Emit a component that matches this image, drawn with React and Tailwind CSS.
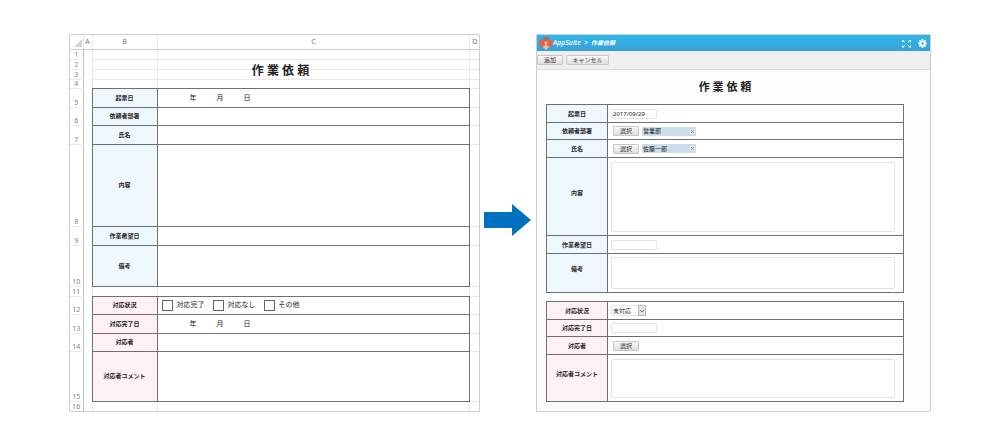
const LINE = "border border-[#707070]";
const GRID = "border border-[#e9e9e9]";
const EDGE = "border border-[#e9e9e9] border-b-[#707070]";

const sheetRows = [
  { no: 1, h: "h-[10px]" },
  { no: 2, h: "h-[10px]" },
  { no: 3, h: "h-[10px]" },
  { no: 4, h: "h-[9px]", edge: true },
  { no: 5, h: "h-[19px]", label: "起票日", tone: "blue", body: <DateBlanks /> },
  { no: 6, h: "h-[18px]", label: "依頼者部署", tone: "blue" },
  { no: 7, h: "h-[19px]", label: "氏名", tone: "blue" },
  { no: 8, h: "h-[82px]", label: "内容", tone: "blue" },
  { no: 9, h: "h-[19px]", label: "作業希望日", tone: "blue" },
  { no: 10, h: "h-[41px]", label: "備考", tone: "blue" },
  { no: 11, h: "h-[10px]", edge: true },
  { no: 12, h: "h-[18px]", label: "対応状況", tone: "pink", body: <StatusChecks /> },
  { no: 13, h: "h-[19px]", label: "対応完了日", tone: "pink", body: <DateBlanks /> },
  { no: 14, h: "h-[18px]", label: "対応者", tone: "pink" },
  { no: 15, h: "h-[50px]", label: "対応者コメント", tone: "pink" },
  { no: 16, h: "h-[10px]" },
];

const tones = {
  blue: "bg-[#f0f8ff]",
  pink: "bg-[#fff1f5]",
};

function DateBlanks() {
  return (
    <div className="flex gap-5 pl-8 text-[7px] leading-[10px]">
      <span>年</span>
      <span>月</span>
      <span>日</span>
    </div>
  );
}

function StatusChecks() {
  return (
    <div className="flex items-center gap-2 pl-1 text-[7px] leading-[10px]">
      {["対応完了", "対応なし", "その他"].map((text) => (
        <label key={text} className="flex items-center gap-1">
          <input
            type="checkbox"
            className="size-[11px] appearance-none border border-[#666] bg-white"
          />
          {text}
        </label>
      ))}
    </div>
  );
}

function Spreadsheet() {
  return (
    <section className="relative min-w-0 flex-[411] rounded-[1px] border border-[#cfcfcf] bg-white">
      <table className="w-full table-fixed border-collapse border-hidden">
        <colgroup>
          <col className="w-[13px]" />
          <col className="w-[9px]" />
          <col className="w-[65px]" />
          <col />
          <col className="w-[9px]" />
        </colgroup>
        <thead className="text-[7px] leading-[10px] text-[#777]">
          <tr className="h-[14px]">
            <th className="border-b border-[#cfcfcf] p-0 align-bottom">
              <svg viewBox="0 0 8 8" className="mb-[2px] ml-1 size-2" aria-hidden="true">
                <path d="M8 0v8H0z" fill="#d4d4d4" />
              </svg>
            </th>
            {["A", "B", "C", "D"].map((name) => (
              <th key={name} className="border-x border-b border-x-[#e9e9e9] border-b-[#cfcfcf] p-0 font-normal">
                {name}
              </th>
            ))}
          </tr>
        </thead>
        <tbody>
          {sheetRows.map((row) => (
            <tr key={row.no} className={row.h}>
              <td className="border-y border-r border-y-[#e9e9e9] border-r-[#bdbdbd] p-0 text-center align-bottom text-[7px] leading-[8px] text-[#7c8692]">
                {row.no}
              </td>
              <td className="p-0" />
              {row.label ? (
                <>
                  <th className={`${LINE} ${tones[row.tone]} p-0 text-[6px] leading-[8px]`}>
                    {row.label}
                  </th>
                  <td className={`${LINE} p-0`}>{row.body}</td>
                </>
              ) : (
                <>
                  <td className={`${row.edge ? EDGE : GRID} p-0`} />
                  <td className={`${row.edge ? EDGE : GRID} p-0`} />
                </>
              )}
              <td className={`${GRID} p-0`} />
            </tr>
          ))}
        </tbody>
      </table>
      {/* The title floats over the grid lines of rows 2 and 3 */}
      <h1 className="absolute inset-x-[10px] top-[27px] pl-[12px] text-center text-[12px] leading-[18px] font-bold">
        <span className="bg-white">作 業 依 頼</span>
      </h1>
    </section>
  );
}

function Arrow() {
  return (
    <div className="flex w-14 shrink-0 justify-center">
      <svg viewBox="0 0 47 32" className="mt-[170px] h-8 w-[47px]" aria-hidden="true">
        <path d="M0 8h28V0l19 16-19 16v-8H0z" fill="#0070c0" />
      </svg>
    </div>
  );
}

function Button({ children, className = "w-[26px]" }) {
  return (
    <button
      type="button"
      className={`${className} h-[10px] rounded-[1px] border border-[#c8c8c8] bg-linear-to-b from-[#f8f8f8] to-[#dedede] text-center text-[6px] leading-[8px] text-[#333]`}
    >
      {children}
    </button>
  );
}

function Picker({ value }) {
  return (
    <div className="flex items-center gap-[3px] pl-[2px]">
      <Button>選択</Button>
      {value && (
        <span className="flex h-[9px] w-[54px] items-center justify-between bg-[#ccdeeb] px-px text-[6px] leading-[8px]">
          {value}
          <button type="button" aria-label="削除" className="size-[5px] bg-[#dfe6eb]">
            <svg viewBox="0 0 5 5" className="size-[5px]">
              <path d="M1 1l3 3M4 1L1 4" stroke="#8a949c" strokeWidth="0.8" />
            </svg>
          </button>
        </span>
      )}
    </div>
  );
}

const FIELD = "block rounded-[2px] border border-[#e4e4e4] bg-white px-px text-[6px] leading-[8px]";

function FormRow({ id, label, tone, h, tall, children }) {
  return (
    <tr className={h}>
      <th className={`${LINE} ${tones[tone]} w-[61px] px-0 pt-0 text-[6px] leading-[8px] ${tall ? "pb-2" : "pb-0"}`}>
        <label htmlFor={id}>{label}</label>
      </th>
      <td className={`${LINE} bg-white py-0 pr-2 pl-[3px]`}>{children}</td>
    </tr>
  );
}

function AppForm() {
  return (
    <section className="flex min-w-0 flex-[395] flex-col rounded-[1px] border border-[#cfcfcf] bg-[#fcfcfc]">
      <header className="flex h-4 items-center bg-linear-to-b from-[#2bb8ea] to-[#3a9fd8] leading-[8px] text-white">
        <svg viewBox="0 0 14 14" className="ml-[2px] size-[14px]" aria-hidden="true">
          <path d="M7 0l4 4-4 4-4-4z" fill="#98706c" />
          <path d="M7 6l4 4-4 4-4-4z" fill="#e3c3bb" />
          <circle cx="3.500" cy="7" r="3.500" fill="#f0603f" />
          <circle cx="10.500" cy="7" r="3.500" fill="#f0603f" />
          <path d="M7 5l1.500 2L7 9 5.500 7z" fill="#f6d9d2" />
        </svg>
        <nav className="flex items-center gap-[3px] text-[7px] italic">
          <a href="#appsuite" className="font-medium">AppSuite</a>
          <span>&gt;</span>
          <span className="text-[6px] font-bold">作業依頼</span>
        </nav>
        <div className="ml-auto flex h-full">
          <button type="button" aria-label="全画面" className="flex w-4 items-center justify-center border-l border-[#4aa9d6]">
            <svg viewBox="0 0 9 9" className="size-[9px]">
              <path d="M0 1h2.500L0 3.500zM9 1v2.500L6.500 1zM0 8.500V6l2.500 2.500zM9 8.500H6.500L9 6z" fill="#fff" />
              <path d="M1 1.500l7 6.500M8 1.500L1 8" stroke="#d8f0fb" strokeDasharray="3 3.500" />
            </svg>
          </button>
          <button type="button" aria-label="設定" className="flex w-4 items-center justify-center border-l border-[#4aa9d6]">
            <svg viewBox="0 0 10 10" className="size-[9px]">
              <path d="M5 0v10M0 5h10M1.500 1.500l7 7M8.500 1.500l-7 7" stroke="#fff" strokeWidth="1.800" />
              <circle cx="5" cy="5" r="3.400" fill="#fff" />
              <circle cx="5" cy="5" r="1.300" fill="#3aa9dd" />
            </svg>
          </button>
        </div>
      </header>
      <div className="flex h-[19px] items-center gap-[3px] border-b border-[#dcdcdc] bg-[#efefef]">
        <Button>追加</Button>
        <Button className="w-[43px]">キャンセル</Button>
      </div>
      <form className="mr-[26px] ml-[9px] flex flex-col gap-2">
        <h2 className="mt-2 text-center text-[11px] leading-[18px] font-bold">作 業 依 頼</h2>
        <table className="w-full table-fixed border-collapse">
          <tbody>
            <FormRow id="issued" label="起票日" tone="blue" h="h-[18px]">
              <input id="issued" defaultValue="2017/09/29" className={`${FIELD} h-[10px] w-[46px]`} />
            </FormRow>
            <FormRow label="依頼者部署" tone="blue" h="h-[17px]">
              <Picker value="営業部" />
            </FormRow>
            <FormRow label="氏名" tone="blue" h="h-[18px]">
              <Picker value="佐藤一郎" />
            </FormRow>
            <FormRow id="content" label="内容" tone="blue" h="h-[78px]" tall>
              <textarea id="content" className={`${FIELD} h-[70px] w-full resize-none`} />
            </FormRow>
            <FormRow id="wanted" label="作業希望日" tone="blue" h="h-[18px]">
              <input id="wanted" className={`${FIELD} h-[10px] w-[46px]`} />
            </FormRow>
            <FormRow id="notes" label="備考" tone="blue" h="h-[39px]" tall>
              <textarea id="notes" className={`${FIELD} h-[32px] w-full resize-none`} />
            </FormRow>
          </tbody>
        </table>
        <table className="w-full table-fixed border-collapse">
          <tbody>
            <FormRow id="status" label="対応状況" tone="pink" h="h-[18px]">
              <div className="relative w-[35px]">
                <select id="status" className={`${FIELD} h-[11px] w-full appearance-none`}>
                  <option>未対応</option>
                </select>
                <span className="pointer-events-none absolute inset-y-0 right-0 flex w-2 items-center justify-center border border-[#bbb] bg-[#e2e2e2]">
                  <svg viewBox="0 0 4 4" className="size-1">
                    <path d="M0 1l2 2 2-2" fill="none" stroke="#555" strokeWidth="0.8" />
                  </svg>
                </span>
              </div>
            </FormRow>
            <FormRow id="done" label="対応完了日" tone="pink" h="h-[17px]">
              <input id="done" className={`${FIELD} h-[10px] w-[46px]`} />
            </FormRow>
            <FormRow label="対応者" tone="pink" h="h-[18px]">
              <Picker />
            </FormRow>
            <FormRow id="comment" label="対応者コメント" tone="pink" h="h-[47px]" tall>
              <textarea id="comment" className={`${FIELD} h-[39px] w-full resize-none`} />
            </FormRow>
          </tbody>
        </table>
      </form>
    </section>
  );
}

export default function App() {
  return (
    <main
      lang="ja"
      className="flex min-h-screen items-start bg-white px-[69px] pt-[34px] pb-9 font-['Noto_Sans','Noto_Sans_CJK_JP',sans-serif] text-[#222]"
    >
      <div className="flex w-full items-stretch">
        <Spreadsheet />
        <Arrow />
        <AppForm />
      </div>
    </main>
  );
}
